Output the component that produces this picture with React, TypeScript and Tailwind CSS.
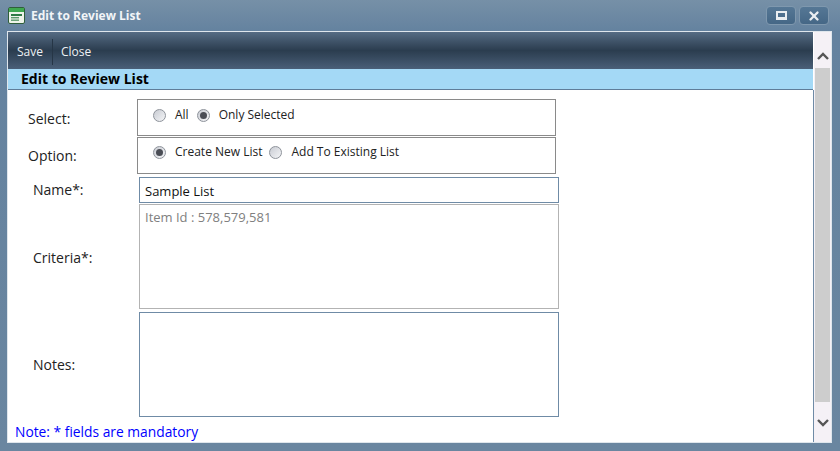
import { X } from 'lucide-react'

const font = "font-['Open_Sans',sans-serif]"

function Radio({ checked, label }: { checked?: boolean; label: string }) {
  return (
    <div className="flex items-center">
      <span className="flex h-[13px] w-[13px] items-center justify-center rounded-full border border-[#8e939b] bg-gradient-to-br from-[#c9ccd3] to-[#f4f5f7]">
        {checked && <span className="h-[7px] w-[7px] rounded-full bg-[#4a4d55]" />}
      </span>
      <span className="ml-[9px] text-[12px] leading-4 text-[#222]">{label}</span>
    </div>
  )
}

function Row({ label, indent, children }: { label: string; indent: string; children: React.ReactNode }) {
  return (
    <div className="flex items-center">
      <div className={`w-[129px] shrink-0 text-[14px] leading-5 text-[#222] ${indent}`}>{label}</div>
      {children}
    </div>
  )
}

export default function App() {
  return (
    <div className={`flex h-[451px] w-[840px] flex-col overflow-hidden bg-gradient-to-b from-[#7690a7] from-0% via-[#64829f] via-[7%] to-[#6a86a0] ${font}`}>
      <div className="flex h-[31px] shrink-0 items-center pl-2 pr-[11px]">
        <svg width="17" height="17" viewBox="0 0 17 17" className="shrink-0">
          <rect x="0.5" y="0.5" width="16" height="16" rx="1.5" fill="#eef4ea" stroke="#2f5f3a" />
          <rect x="1" y="1" width="15" height="4" fill="#3fa850" />
          <rect x="3" y="7" width="11" height="2" fill="#2f7a45" />
          <rect x="3" y="10" width="8" height="1.4" fill="#5d9a6d" />
          <rect x="3" y="12.5" width="8" height="1.4" fill="#5d9a6d" />
        </svg>
        <div className="ml-[6px] text-[12px] font-bold text-[#f2f5f8]">Edit to Review List</div>
        <div className="ml-auto flex gap-[3px]">
          <button className="flex h-[19px] w-[30px] items-center justify-center rounded-[4px] border border-[#7f98ae] bg-gradient-to-b from-[#557795] to-[#456786]">
            <span className="h-[9px] w-[11px] border-2 border-b-[3px] border-[#e9edf1]" />
          </button>
          <button className="flex h-[19px] w-[30px] items-center justify-center rounded-[4px] border border-[#7f98ae] bg-gradient-to-b from-[#557795] to-[#456786]">
            <X size={14} strokeWidth={4} className="text-[#e9edf1]" />
          </button>
        </div>
      </div>
      <div className="ml-[7px] mr-2 flex h-[412px] border border-[#dfe6ec] bg-white">
        <div className="flex min-w-0 flex-1 flex-col">
          <div className="mr-px flex h-[37px] shrink-0 items-center bg-gradient-to-b from-[#566c84] via-[#2b3d4f] to-[#4a5f78] pt-[2px]">
            <span className="px-[9px] text-[12px] text-[#eef1f4]">Save</span>
            <span className="h-[26px] w-px bg-[#263646]" />
            <span className="px-[8px] text-[12px] text-[#eef1f4]">Close</span>
          </div>
          <div className="mr-px flex h-[21px] shrink-0 items-center border-b border-[#5f7d99] bg-[#a4d9f6] pl-[13px] text-[14px] leading-5 font-bold text-black">
            Edit to Review List
          </div>
          <div className="flex flex-1 flex-col border-r border-[#6f8ba6] pt-[9px]">
            <Row label="Select:" indent="pl-5 pt-[2px]">
              <div className="h-[37px] w-[419px] border border-[#8a8a8a] pl-[15px] pt-[7px]">
                <div className="flex gap-2">
                  <Radio label="All" />
                  <Radio checked label="Only Selected" />
                </div>
              </div>
            </Row>
            <div className="mt-[1px]">
              <Row label="Option:" indent="pl-5">
                <div className="h-[37px] w-[419px] border border-[#8a8a8a] pl-[15px] pt-[6px]">
                  <div className="flex gap-[7px]">
                    <Radio checked label="Create New List" />
                    <Radio label="Add To Existing List" />
                  </div>
                </div>
              </Row>
            </div>
            <div className="mt-[3px]">
              <Row label="Name*:" indent="pl-[25px] pb-[1px]">
                <div className="ml-[2px] h-[26px] w-[420px] border border-[#6f8ba6] pl-[5px] text-[13px] leading-[26px] text-[#111]">
                  Sample List
                </div>
              </Row>
            </div>
            <div className="mt-[1px]">
              <Row label="Criteria*:" indent="pl-[25px] pt-[2px]">
                <div className="ml-[2px] h-[105px] w-[420px] border border-[#b3b3b3] pl-[5px] pt-[2px] text-[13px] leading-5 text-[#808080]">
                  Item Id : 578,579,581
                </div>
              </Row>
            </div>
            <div className="mt-[3px]">
              <Row label="Notes:" indent="pl-[25px]">
                <div className="ml-[2px] h-[105px] w-[420px] border border-[#6f8ba6]" />
              </Row>
            </div>
            <div className="mt-[5px] pl-[7px] text-[13.8px] leading-5 text-[#0000ff]">Note: * fields are mandatory</div>
          </div>
        </div>
        <div className="flex w-[17px] shrink-0 flex-col bg-[#f5f1f6]">
          <div className="flex h-[36px] shrink-0 items-center justify-center pt-[12px]">
            <svg width="12" height="8" viewBox="0 0 12 8"><path d="M1 7l5-5 5 5" fill="none" stroke="#555" strokeWidth="2.4" /></svg>
          </div>
          <div className="mx-px h-[334px] shrink-0 bg-[#cdcdcd]" />
          <div className="flex flex-1 items-center justify-center pt-[2px]">
            <svg width="12" height="8" viewBox="0 0 12 8"><path d="M1 1l5 5 5-5" fill="none" stroke="#555" strokeWidth="2.4" /></svg>
          </div>
        </div>
      </div>
    </div>
  )
}
